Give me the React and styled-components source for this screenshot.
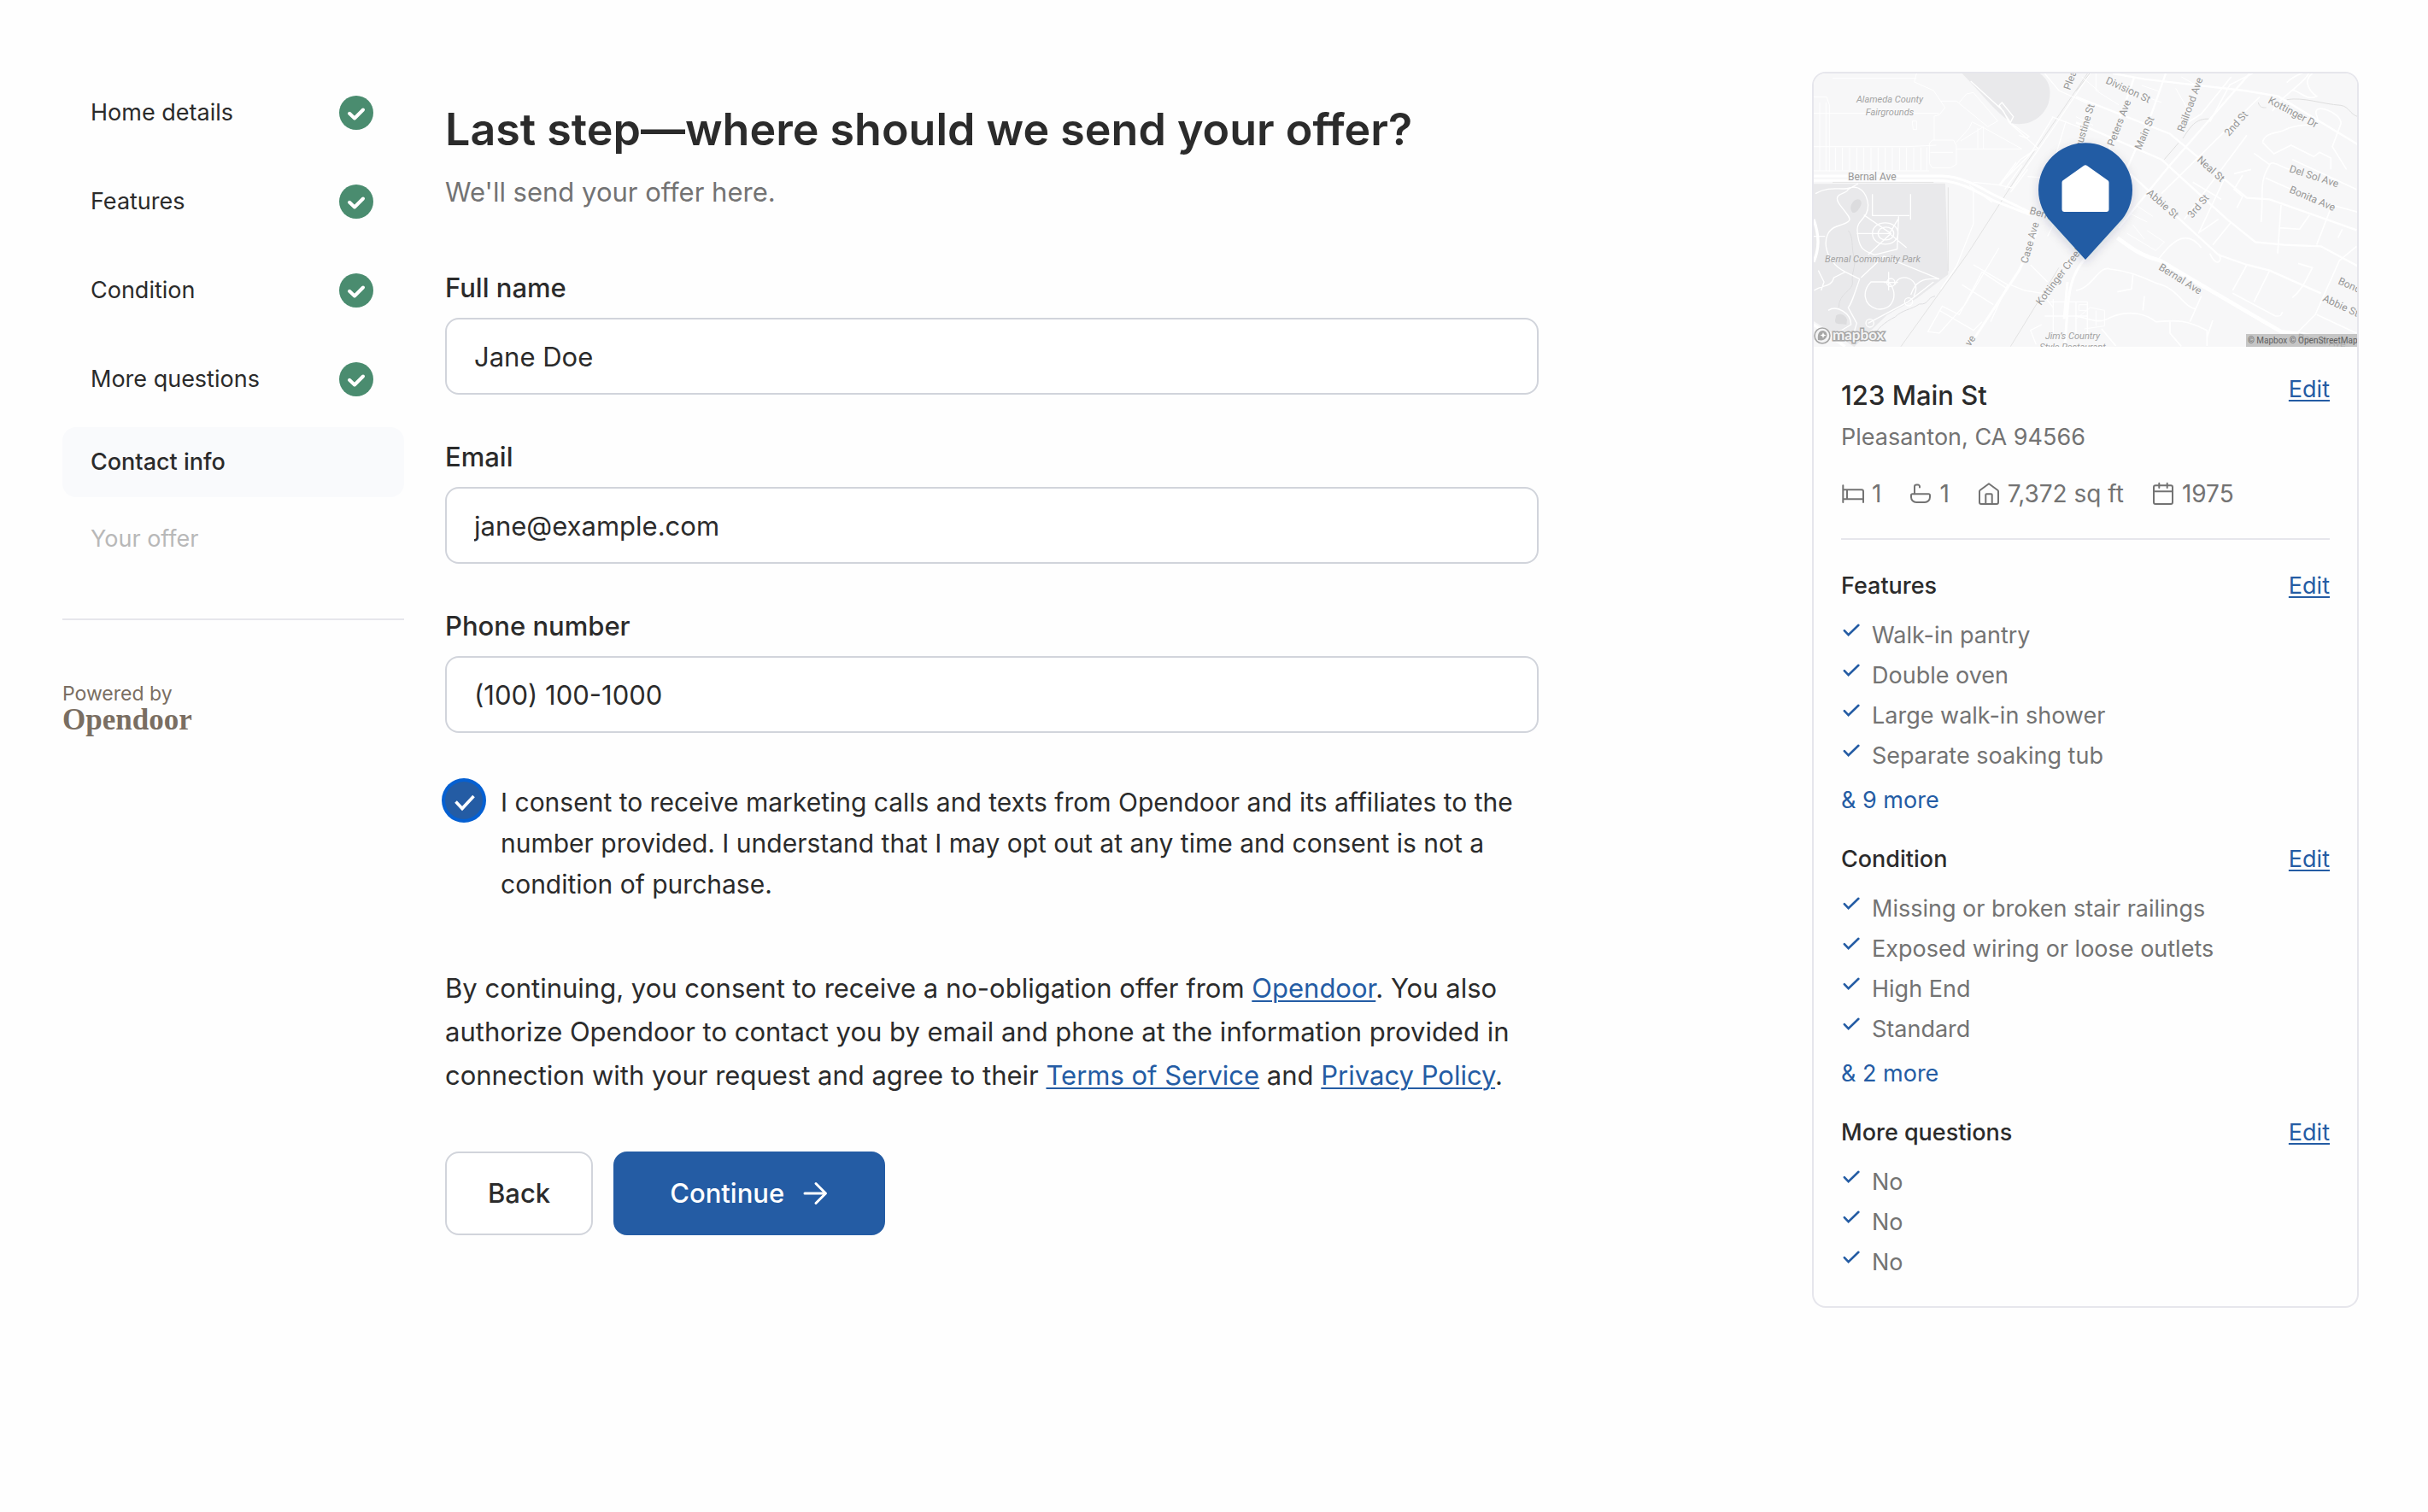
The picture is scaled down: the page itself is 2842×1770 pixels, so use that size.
import React, { useState } from 'react'
import styled, { createGlobalStyle, css } from 'styled-components'

const steps = [
  { label: 'Home details', status: 'done' },
  { label: 'Features', status: 'done' },
  { label: 'Condition', status: 'done' },
  { label: 'More questions', status: 'done' },
  { label: 'Contact info', status: 'current' },
  { label: 'Your offer', status: 'upcoming' },
]

const sections = [
  {
    title: 'Features',
    items: ['Walk-in pantry', 'Double oven', 'Large walk-in shower', 'Separate soaking tub'],
    more: 9,
  },
  {
    title: 'Condition',
    items: ['Missing or broken stair railings', 'Exposed wiring or loose outlets', 'High End', 'Standard'],
    more: 2,
  },
  { title: 'More questions', items: ['No', 'No', 'No'] },
]

const StepCheck = () => (
  <svg width="40" height="40" viewBox="0 0 40 40" fill="none" aria-hidden="true">
    <circle cx="20" cy="20" r="20" fill="#4a8c6f" />
    <path d="M12 20.800l6 5.700 10-10" stroke="#fff" strokeWidth="4" strokeLinecap="round" strokeLinejoin="round" />
  </svg>
)

const ItemCheck = () => (
  <svg width="24" height="24" viewBox="0 0 24 24" fill="none" aria-hidden="true">
    <path d="M3.800 10.200l4.800 5L20.400 3.800" stroke="#245ca4" strokeWidth="2.600" strokeLinecap="round" />
  </svg>
)

const StatIcon = ({ children }) => (
  <svg
    width="28"
    height="28"
    viewBox="0 0 28 28"
    fill="none"
    stroke="currentColor"
    strokeWidth="2"
    strokeLinecap="round"
    strokeLinejoin="round"
    aria-hidden="true"
  >
    {children}
  </svg>
)

const BedIcon = () => (
  <StatIcon>
    <path d="M2.300 4.300V24M2.300 9.300H24a2 2 0 0 1 2 2V24M2.300 20.300H26M7 9.300v11" />
  </StatIcon>
)

const BathIcon = () => (
  <StatIcon>
    <path d="M4.500 14.300h19a1.500 1.500 0 0 1 1.500 1.500V18a6 6 0 0 1-6 6H9a6 6 0 0 1-6-6v-2.200a1.500 1.500 0 0 1 1.500-1.500z" />
    <path d="M7 14.300V5.800a2.300 2.300 0 0 1 2.300-2.300H11a2 2 0 0 1 2 2v1" />
  </StatIcon>
)

const HouseIcon = () => (
  <StatIcon>
    <path d="M14 2.300l10.200 7.400c.5.4.8 1 .8 1.600V24a2 2 0 0 1-2 2H5a2 2 0 0 1-2-2V11.300c0-.6.3-1.200.8-1.600z" />
    <path d="M10.300 26V15.300a1 1 0 0 1 1-1h5.400a1 1 0 0 1 1 1V26" />
  </StatIcon>
)

const CalendarIcon = () => (
  <StatIcon>
    <rect x="3" y="4.300" width="22" height="21.700" rx="2" />
    <path d="M3 11.300h22M9.300 1.700V7M18.700 1.700V7" />
  </StatIcon>
)

const ArrowIcon = () => (
  <svg width="32" height="32" viewBox="0 0 32 32" fill="none" aria-hidden="true">
    <path
      d="M4 16h24M17 4.500L28.500 16 17 27.500"
      stroke="#fff"
      strokeWidth="3"
      strokeLinecap="round"
      strokeLinejoin="round"
    />
  </svg>
)

const NeighborhoodMap = () => (
  <MapSvg viewBox="0 0 636 320" preserveAspectRatio="xMidYMid slice" role="img" aria-label="Map of 123 Main St">
    <defs>
      <filter id="pinShadow" x="-30%" y="-30%" width="160%" height="160%">
        <feDropShadow dx="0" dy="4" stdDeviation="6" floodColor="#1b2a4a" floodOpacity="0.16" />
      </filter>
    </defs>
    <rect width="636" height="320" fill="#f7f7f8" />

    {/* west side: fairgrounds, park, creek */}
    <g transform="translate(-13 -16) scale(.33333)" fill="none">
      <path d="M560 48c60 60 110 130 175 175 60 12 110-20 128-70 12-45 5-80-30-105z" fill="#e9e9eb" />
      <path d="M39 436L501 434l10 320-110 84-105 58-115 112-142-90z" fill="#e9e9eb" />
      <path d="M185 492c15-8 25 4 20 18-8 18-18 30-30 26-12-12-6-34 10-44zM118 898c18-10 30-2 38 14l-2 18c-20-4-42 2-40-16z" fill="#dcdcde" />
      <path d="M105 430H460M511 448v294M1000 48L760 400 580 680 345 1007M900 730L730 1007" stroke="#e2e2e2" strokeWidth="3" />
      <path d="M465 830c-30 5-20 30-55 28-30 20-60 20-85 45-40 20-60 40-80 70M160 600c20 20 10 60 20 90s-10 60-5 90-50 40-48 90" stroke="#dedee0" strokeWidth="3" />
      <path
        d="M39 408h450c60 0 120 30 170 60l140 68M39 424h440c60 0 120 30 190 70l130 50"
        stroke="#fff"
        strokeWidth="9"
      />
      <path
        d="M39 130h45l10 28v235M39 188h440M39 305h330l100-5M39 390h405M60 150v240M82 150v240M115 308v80M140 308v80M165 308v80M190 308v80M215 308v80M240 308v80M265 308v80M290 308v80M315 308v80M340 308v80M365 308v80M390 308v80M415 308v80M436 308v80M105 65h295M400 48l-8 30 68 30 40 60-20 25-18 5v85M385 215h15v30h-12zM455 282h75l10 20v65l-20 12h-65l-10-15v-70zM448 325h80M485 145h55l110 90 35-20-85-100-25 5-25 30M540 290l45-50 10-22 40 20 135 75H540M555 285l80-50v78M615 240v70"
        stroke="#fff"
        strokeWidth="3"
      />
      <path
        d="M590 75l115 105 20 40 100 90-60 40-70 90-95-10M700 150l40 50-10 20-40-60zM735 225l60 45-10 5-25-10M850 48l50 60 100 45M875 200l110 42M925 215l-60 200-75-5M1010 48L880 240 735 450 690 440 800 330 880 200M750 360l-60 80M770 370l-60 85M790 385l-60 80M600 455v120l-60 150-55 80M585 440l80 60"
        stroke="#fff"
        strokeWidth="4"
      />
      <path d="M825 600L760 740 595 990" stroke="#fff" strokeWidth="9" />
      <path d="M990 700c-50 60-55 120-60 180l-10 130M930 780l-12 130" stroke="#fff" strokeWidth="9" />
      <path
        d="M690 660L570 860l-90 100-40-5 50-90 60 30 80-150 90 60M600 720l120 70-60 130M560 790l110 70M480 880l120 70 30-30M730 790l50 20 60 10 40 50M800 720l60 60M860 620l30-60M870 850h130M850 900h150M880 840v120M960 850v110M1000 850v120M820 1000l-20-50 40-20"
        stroke="#fff"
        strokeWidth="4"
      />
      <path
        d="M45 470c50-30 90-10 120-20s60 10 65 60c0 50-40 50-38 90 5 70 25 70 60 85l80-20 5-115M39 620h40M40 810c30-20 60-10 70-45l40-20c-80-40-90-140-30-160s55-20 15-70 20-40 25-60l35-20M245 472v75h130M379 472v90M190 610h115l60 50M215 545l95 65-80 75M305 610l30-50M150 745l50 25c-20 60-30 90-40 100l30 55-15 50M205 765l80-75 195 80c-60-5-85 10-100 55M240 780c-30 30-30 80 20 95 60 10 80-60 40-95zM325 790c10-50 100-20 65 40M90 880c30-20 80 10 80 50l-50 30M230 925l140-75 90-70M55 740l20 40-10 30"
        stroke="#fff"
        strokeWidth="4"
      />
      <path d="M245 610c0-50 90-50 90 0s-90 50-90 0zM265 610c0-30 55-30 55 0s-55 30-55 0zM285 782h50M302 745v65M310 782m-14 0a14 14 0 1 0 28 0a14 14 0 1 0-28 0M236 925m-14 0a14 14 0 1 0 28 0a14 14 0 1 0-28 0M372 850m-14 0a14 14 0 1 0 28 0a14 14 0 1 0-28 0" stroke="#fff" strokeWidth="4" />
      <path d="M39 560c20 60 20 100 0 150M39 930l110 77" stroke="#fff" strokeWidth="10" />
    </g>

    {/* downtown grid and the hills to the east */}
    <g transform="translate(307 -16) scale(.33333)" fill="none">
      <path d="M740 140c60-10 120 15 190 20 30 5 30 30 60 40M470 208c-50-5-70 30-95 68M310 350l50-58M640 150c5 20 20 18 28 18M0 110l48-62" stroke="#dedede" strokeWidth="3" />
      <path
        d="M610 48L330 370 150 590M315 48L265 190 180 380M205 60L110 330M130 48l110 20 350 40 120 20 280 170M0 130l330 130 270 225 80 5 305 108M0 220l300 130 230 210 100 80 100 10 130 5 130 70M190 400l310 285 100 35 80 20 180 80"
        stroke="#fff"
        strokeWidth="7"
      />
      <path
        d="M645 130L300 470M600 265L380 560M520 420L430 610M545 570l-65 80M545 60L440 190 360 240M500 560l-65 45M620 48l-80 40-70 130M410 430l100 60M555 400l60-15M585 405l-30 50 30 25-20 40"
        stroke="#fff"
        strokeWidth="5"
      />
      <path d="M145 625c60 45 90 65 150 80l110 65L720 955l80 10 190 40" stroke="#fff" strokeWidth="14" />
      <path
        d="M0 810c60-10 80-90 120-75 90 10 130 40 180 55 60 20 80 80 120 85M0 900c50 10 80 30 120 5 70-30 130-10 160 15 70-5 100-10 180 30l0 55M330 920v40l40 47M90 945l50 60M145 815l50-10 5-50M440 830l-40 90M235 880l5-50M480 915l-20 60"
        stroke="#fff"
        strokeWidth="5"
      />
      <path
        d="M690 180c20-40 60-60 110-110s-30-20-60 10M830 48c-40 30 0 70 15 80-40 20-70-30-90-20M655 290c10-40 60-30 80-45 60-30 130 0 110-50s90-10 85 30l-30 80 50 80M655 290l40 40 60-30 80 40 20-15 40 20v40M625 328l55 40c10-20 50 20 100 25M680 370c-40 60-20 100-30 200M665 415l180 80 145 40M760 350L985 455M720 510l-12 170M715 590l70 5 35-50M895 520l-50 130M935 595l-15 30M985 655l-60 50-85 190-65 65M845 895l140 65M600 720l-50 90M680 740l-55 110M550 820l150 80c20 0 20 0 25-15M780 715l50 15c-30 60-40 80-70 105M500 680c20 30-10 50-30 0M290 700c30-40 90-120 150-40"
        stroke="#fff"
        strokeWidth="5"
      />
      <path
        d="M190 540l60 30M210 510l60 40M180 610l100 60 30-30-60-40M200 580l40 50M0 200l60 30M20 60l60 50M70 48v60l80 50M220 120l80 30M230 90l60 20M350 100l40 70M370 60l70 40M10 860h30v20H10zM0 910l50-40 50 10v55l-70 10M40 880v60M70 880v55"
        stroke="#fff"
        strokeWidth="3"
      />
    </g>

    <PlaceLabel textAnchor="middle">
      <text x="89" y="34">Alameda County</text>
      <text x="89" y="49">Fairgrounds</text>
      <text x="69" y="221">Bernal Community Park</text>
      <text x="303" y="311">Jim’s Country</text>
      <text x="303" y="324">Style Restaurant</text>
    </PlaceLabel>
    <StreetLabel>
      <text x="40" y="125">Bernal Ave</text>
      <text transform="translate(252 164) rotate(16)">Bernal Ave</text>
      <text transform="translate(250 223) rotate(-74)">Case Ave</text>
      <text transform="translate(266 272) rotate(-53)">Kottinger Creek</text>
      <text transform="translate(300 20) rotate(-70)">Pleasanton Ave</text>
      <text transform="translate(309 102) rotate(-73)">Augustine St</text>
      <text transform="translate(341 11) rotate(25)">Division St</text>
      <text transform="translate(351 86) rotate(-69)">Peters Ave</text>
      <text transform="translate(383 90) rotate(-67)">Main St</text>
      <text transform="translate(433 69) rotate(-70)">Railroad Ave</text>
      <text transform="translate(486 74) rotate(-48)">2nd St</text>
      <text transform="translate(531 34) rotate(28)">Kottinger Dr</text>
      <text transform="translate(448 102) rotate(42)">Neal St</text>
      <text transform="translate(389 141) rotate(41)">Abbie St</text>
      <text transform="translate(443 170) rotate(-50)">3rd St</text>
      <text transform="translate(556 115) rotate(18)">Del Sol Ave</text>
      <text transform="translate(556 139) rotate(23)">Bonita Ave</text>
      <text transform="translate(403 229) rotate(32)">Bernal Ave</text>
      <text transform="translate(613 246) rotate(24)">Bonds Dr</text>
      <text transform="translate(595 266) rotate(25)">Abbie St</text>
      <text transform="translate(566 313) rotate(8)">Bernal Ave</text>
      <text transform="translate(183 320) rotate(-55)">ve</text>
    </StreetLabel>

    <path d="M318 218L279 175A55 55 0 1 1 357 175z" fill="#245ca4" filter="url(#pinShadow)" />
    <path
      d="M316 108c1.300-1 2.700-1 4 0l24 17c1 .8 1.500 1.600 1.500 3v31a3 3 0 0 1-3 3h-49a3 3 0 0 1-3-3v-31c0-1.400.5-2.200 1.500-3z"
      fill="#fff"
    />

    {/* map provider mark */}
    <circle cx="10" cy="307" r="9" fill="#f4f4f5" stroke="#a6a6a6" strokeWidth="1.600" />
    <path d="M5 312c-1-8 2-11 6-11 6 1 6 9 0 11-2 1-4 0-6 0z" fill="#a6a6a6" />
    <path d="M11 303l1 2.500 2.500 1-2.500 1-1 2.500-1-2.500-2.500-1 2.500-1z" fill="#fff" />
    <MapMark x="22" y="312">mapbox</MapMark>
    <rect x="506" y="305" width="130" height="15" fill="#b4b4b4" fillOpacity="0.75" />
    <Attribution x="508" y="316">© Mapbox © OpenStreetMap</Attribution>
  </MapSvg>
)

const App = () => {
  const [form, setForm] = useState({
    name: 'Jane Doe',
    email: 'jane@example.com',
    phone: '(100) 100-1000',
  })
  const [consent, setConsent] = useState(true)

  const update = e => setForm({ ...form, [e.target.name]: e.target.value })

  return (
    <Page>
      <GlobalStyle />
      <Sidebar>
        <StepList>
          {steps.map(step => (
            <Step key={step.label} $status={step.status}>
              {step.label}
              {step.status === 'done' && <StepCheck />}
            </Step>
          ))}
        </StepList>
        <PoweredBy>
          Powered by
          <Wordmark>Opendoor</Wordmark>
        </PoweredBy>
      </Sidebar>

      <Main>
        <Title>Last step—where should we send your offer?</Title>
        <Subtitle>We'll send your offer here.</Subtitle>
        <Form onSubmit={e => e.preventDefault()}>
          <Field>
            <Label htmlFor="name">Full name</Label>
            <Input id="name" name="name" type="text" value={form.name} onChange={update} />
          </Field>
          <Field>
            <Label htmlFor="email">Email</Label>
            <Input id="email" name="email" type="email" value={form.email} onChange={update} />
          </Field>
          <Field>
            <Label htmlFor="phone">Phone number</Label>
            <Input id="phone" name="phone" type="tel" value={form.phone} onChange={update} />
          </Field>
          <Consent>
            <CheckWrap>
              <Checkbox id="consent" type="checkbox" checked={consent} onChange={e => setConsent(e.target.checked)} />
              {consent && (
                <CheckMark viewBox="0 0 44 44" fill="none" aria-hidden="true">
                  <path d="M12.500 23.500l7.500 8L33.500 17" stroke="#fff" strokeWidth="3.600" />
                </CheckMark>
              )}
            </CheckWrap>
            <ConsentLabel htmlFor="consent">
              I consent to receive marketing calls and texts from Opendoor and its affiliates to the number provided. I
              understand that I may opt out at any time and consent is not a condition of purchase.
            </ConsentLabel>
          </Consent>
          <Legal>
            By continuing, you consent to receive a no-obligation offer from <Link href="#opendoor">Opendoor</Link>. You
            also authorize Opendoor to contact you by email and phone at the information provided in connection with
            your request and agree to their <Link href="#terms">Terms of Service</Link> and{' '}
            <Link href="#privacy">Privacy Policy</Link>.
          </Legal>
          <Actions>
            <Button type="button">Back</Button>
            <Button type="submit" $primary>
              Continue
              <ArrowIcon />
            </Button>
          </Actions>
        </Form>
      </Main>

      <Card>
        <NeighborhoodMap />
        <CardBody>
          <AddressRow>
            <div>
              <Address>123 Main St</Address>
              <City>Pleasanton, CA 94566</City>
            </div>
            <EditLink href="#edit-home">Edit</EditLink>
          </AddressRow>
          <Stats>
            <Stat>
              <BedIcon />1
            </Stat>
            <Stat>
              <BathIcon />1
            </Stat>
            <Stat>
              <HouseIcon />
              7,372 sq ft
            </Stat>
            <Stat>
              <CalendarIcon />
              1975
            </Stat>
          </Stats>
          {sections.map(section => (
            <Section key={section.title}>
              <SectionHead>
                <SectionTitle>{section.title}</SectionTitle>
                <Link href="#edit">Edit</Link>
              </SectionHead>
              <Items>
                {section.items.map((item, i) => (
                  <Item key={i}>
                    <ItemCheck />
                    {item}
                  </Item>
                ))}
              </Items>
              {section.more && <MoreButton type="button">&amp; {section.more} more</MoreButton>}
            </Section>
          ))}
        </CardBody>
      </Card>
    </Page>
  )
}

const GlobalStyle = createGlobalStyle`
  * {
    box-sizing: border-box;
  }
  body {
    margin: 0;
    background: #fefefe;
    color: #2b2b2b;
    font-family: Inter, 'Liberation Sans', sans-serif;
    font-size: 27px;
    line-height: 42px;
  }
  h1, h2, h3, p, ul {
    margin: 0;
    padding: 0;
  }
  ul {
    list-style: none;
  }
`

const Page = styled.div`
  display: grid;
  grid-template-columns: 400px minmax(0, 1fr) 640px;
  column-gap: 48px;
  align-items: start;
  padding: 84px 81px 84px 73px;
`

const Sidebar = styled.aside`
  color: #2b2b2b;
`

const StepList = styled.ul`
  display: flex;
  flex-direction: column;
  gap: 8px;
  padding-bottom: 52px;
  border-bottom: 2px solid #e6e6ec;
`

const Step = styled.li`
  display: flex;
  align-items: center;
  justify-content: space-between;
  min-height: 82px;
  padding: 0 36px 0 33px;
  border-radius: 16px;

  ${({ $status }) =>
    $status === 'done' &&
    css`
      min-height: 96px;
    `}
  ${({ $status }) =>
    $status === 'current' &&
    css`
      background: #f9fafc;
      font-weight: 500;
    `}
  ${({ $status }) =>
    $status === 'upcoming' &&
    css`
      color: #b8b8b8;
    `}
`

const PoweredBy = styled.div`
  margin-top: 70px;
  color: #7a6e62;
  font-size: 23px;
  line-height: 32px;
`

const Wordmark = styled.div`
  font-family: 'Liberation Serif', serif;
  font-size: 35px;
  font-weight: 700;
  line-height: 30px;
`

const Main = styled.main`
  max-width: 1280px;
  padding-top: 34px;
`

const Title = styled.h1`
  font-size: 52px;
  font-weight: 600;
  line-height: 68px;
`

const Subtitle = styled.p`
  margin-top: 15px;
  color: #737373;
  font-size: 31px;
  line-height: 48px;
`

const Form = styled.form`
  margin-top: 64px;
  font-size: 31px;
  line-height: 48px;
`

const Field = styled.div`
  display: flex;
  flex-direction: column;
  gap: 11px;
  margin-bottom: 49px;
`

const Label = styled.label`
  font-weight: 500;
`

const Input = styled.input`
  width: 100%;
  height: 90px;
  padding: 0 32px;
  border: 2px solid #d1d4db;
  border-radius: 16px;
  background: #fff;
  color: inherit;
  font: inherit;
`

const Consent = styled.div`
  display: flex;
  gap: 21px;
  margin-top: 57px;
`

const CheckWrap = styled.div`
  position: relative;
  flex: none;
  width: 44px;
  height: 44px;
`

const Checkbox = styled.input`
  display: block;
  width: 44px;
  height: 44px;
  margin: 0;
  appearance: none;
  border: 2px solid #d1d4db;
  border-radius: 50%;

  &:checked {
    border: none;
    background: #245ca4;
    box-shadow: 0 0 0 4px #0560d2;
  }
`

const CheckMark = styled.svg`
  position: absolute;
  inset: 0;
  pointer-events: none;
`

const ConsentLabel = styled.label`
  flex: 1;
  font-size: 30px;
`

const Legal = styled.p`
  margin-top: 72px;
  line-height: 51px;
`

const Link = styled.a`
  color: #245ca4;
  text-decoration: underline;
  text-decoration-thickness: 2px;
  text-underline-offset: 3px;
`

const Actions = styled.div`
  display: flex;
  gap: 24px;
  margin-top: 64px;
`

const Button = styled.button`
  display: flex;
  align-items: center;
  gap: 20px;
  height: 98px;
  padding: 0 48px;
  border: 2px solid #d1d4db;
  border-radius: 16px;
  background: #fff;
  color: #2b2b2b;
  font: inherit;
  font-weight: 500;
  cursor: pointer;

  ${({ $primary }) =>
    $primary &&
    css`
      padding: 0 64px;
      border-color: #245ca4;
      background: #245ca4;
      color: #fff;
    `}
`

const Card = styled.aside`
  overflow: hidden;
  border: 2px solid #e6e6ec;
  border-radius: 16px;
`

const MapSvg = styled.svg`
  display: block;
  width: 100%;
  height: 320px;
`

const PlaceLabel = styled.g`
  fill: #a3a3a3;
  font-family: Roboto, sans-serif;
  font-size: 11px;
  font-style: italic;
`

const StreetLabel = styled.g`
  fill: #979797;
  stroke: #f7f7f8;
  stroke-width: 2px;
  paint-order: stroke;
  font-family: Roboto, sans-serif;
  font-size: 12px;
`

const MapMark = styled.text`
  fill: #f4f4f5;
  stroke: #a6a6a6;
  stroke-width: 3px;
  paint-order: stroke;
  font-family: Lato, sans-serif;
  font-size: 17px;
  font-weight: 700;
`

const Attribution = styled.text`
  fill: #5f5f5f;
  font-family: Roboto, sans-serif;
  font-size: 10px;
`

const CardBody = styled.div`
  padding: 33px 32px 28px;
`

const AddressRow = styled.div`
  display: flex;
  align-items: flex-start;
  justify-content: space-between;
`

const Address = styled.h2`
  font-size: 31px;
  font-weight: 500;
  line-height: 48px;
`

const City = styled.p`
  margin-top: 4px;
  color: #737373;
`

const EditLink = styled(Link)`
  line-height: 34px;
`

const Stats = styled.ul`
  display: flex;
  gap: 32px;
  margin-top: 24px;
  padding-bottom: 31px;
  border-bottom: 2px solid #e6e6ec;
  color: #737373;
  font-size: 28px;
`

const Stat = styled.li`
  display: flex;
  align-items: center;
  gap: 8px;
`

const Section = styled.section`
  margin-top: 33px;

  & + & {
    margin-top: 27px;
  }
`

const SectionHead = styled.div`
  display: flex;
  justify-content: space-between;
`

const SectionTitle = styled.h3`
  font-size: 27px;
  font-weight: 500;
`

const Items = styled.ul`
  margin-top: 13px;
  color: #737373;
`

const Item = styled.li`
  display: flex;
  gap: 12px;
  line-height: 47px;

  svg {
    flex: none;
    margin-top: 8px;
  }
`

const MoreButton = styled.button`
  display: block;
  margin-top: 8px;
  padding: 0;
  border: none;
  background: none;
  color: #245ca4;
  font: inherit;
  cursor: pointer;
`

export default App
